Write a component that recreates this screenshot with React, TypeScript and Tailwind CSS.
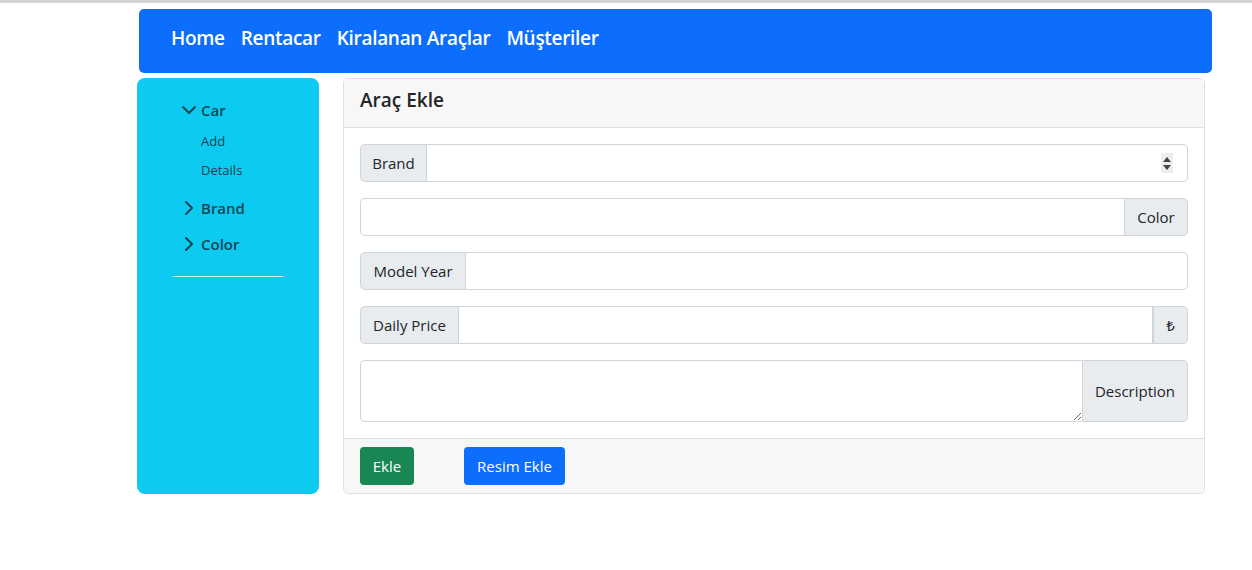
import { ChevronDown, ChevronRight } from "lucide-react";

const font = { fontFamily: '"Open Sans", "Noto Sans", sans-serif' };

function Addon({ label, className }: { label: string; className: string }) {
  return (
    <span
      className={`flex shrink-0 items-center justify-center border border-[#ced4da] bg-[#e9ecef] text-[15px] text-[#212529] ${className}`}
    >
      {label}
    </span>
  );
}

function Field({ children }: { children: React.ReactNode }) {
  return <div className="flex h-[38px] w-full">{children}</div>;
}

export default function App() {
  return (
    <div className="min-h-[570px] border-t-[3px] border-[#d4d4d4] bg-white text-[#212529]" style={font}>
      <nav className="ml-[139px] mt-[6px] flex h-[64px] w-[1073px] items-center gap-[16px] rounded-[5px] bg-[#0d6efd] pb-[6px] pl-[32px] text-[19px] font-semibold tracking-[-0.3px] text-white">
        <span>Home</span>
        <span>Rentacar</span>
        <span>Kiralanan Araçlar</span>
        <span>Müşteriler</span>
      </nav>

      <div className="mt-[5px] flex items-start">
        <aside className="ml-[137px] h-[416px] w-[182px] rounded-[8px] bg-[#0dcaf0] pt-[19px] text-[#124655]">
          <div className="flex flex-col pl-[40px]">
            <div className="flex h-[26px] items-center text-[15px] font-semibold">
              <ChevronDown className="h-[24px] w-[24px]" strokeWidth={2} />
              <span>Car</span>
            </div>
            <div className="mt-[4px] flex flex-col pl-[24px] text-[13px] text-[#18414d]">
              <span className="h-[29px] leading-[29px]">Add</span>
              <span className="h-[29px] leading-[29px]">Details</span>
            </div>
            <div className="mt-[5px] flex h-[36px] items-center text-[15px] font-semibold">
              <ChevronRight className="h-[24px] w-[24px]" strokeWidth={2} />
              <span>Brand</span>
            </div>
            <div className="flex h-[36px] items-center text-[15px] font-semibold">
              <ChevronRight className="h-[24px] w-[24px]" strokeWidth={2} />
              <span>Color</span>
            </div>
          </div>
          <div className="ml-[36px] mt-[14px] h-px w-[110px] bg-[#cdf4fc]" />
        </aside>

        <section className="ml-[24px] flex h-[416px] w-[862px] flex-col rounded-[5px] border border-[#dfdfdf]">
          <header className="flex h-[49px] items-center border-b border-[#dfdfdf] bg-[#f7f7f7] pb-[5px] pl-[16px] text-[19px] font-semibold">
            Araç Ekle
          </header>

          <div className="flex flex-1 flex-col gap-[16px] bg-white px-[16px] pt-[16px]">
            <Field>
              <Addon label="Brand" className="w-[67px] rounded-l-[5px]" />
              <div className="relative flex-1 rounded-r-[5px] border border-l-0 border-[#ced4da]">
                <div className="absolute right-[14px] top-[8px] flex h-[20px] w-[12px] flex-col items-center justify-center gap-[3px] bg-[#ededed]">
                  <span className="h-0 w-0 border-x-[4px] border-b-[5px] border-x-transparent border-b-[#444]" />
                  <span className="h-0 w-0 border-x-[4px] border-t-[5px] border-x-transparent border-t-[#444]" />
                </div>
              </div>
            </Field>
            <Field>
              <div className="flex-1 rounded-l-[5px] border border-r-0 border-[#ced4da]" />
              <Addon label="Color" className="w-[64px] rounded-r-[5px]" />
            </Field>
            <Field>
              <Addon label="Model Year" className="w-[106px] rounded-l-[5px]" />
              <div className="flex-1 rounded-r-[5px] border border-l-0 border-[#ced4da]" />
            </Field>
            <Field>
              <Addon label="Daily Price" className="w-[99px] rounded-l-[5px]" />
              <div className="flex-1 border border-l-0 border-[#ced4da]" />
              <Addon label="₺" className="w-[35px] rounded-r-[5px] text-[13px]" />
            </Field>
            <div className="flex h-[62px] w-full">
              <textarea className="h-full flex-1 rounded-l-[5px] border border-r-0 border-[#ced4da] outline-none" />
              <Addon label="Description" className="w-[106px] rounded-r-[5px]" />
            </div>
          </div>

          <footer className="mt-[1px] flex h-[55px] items-center gap-[50px] rounded-b-[5px] border-t border-[#dfdfdf] bg-[#f7f7f7] pl-[16px] text-[15px]">
            <button className="h-[38px] w-[54px] rounded-[4px] bg-[#198754] text-white">Ekle</button>
            <button className="h-[38px] w-[101px] rounded-[4px] bg-[#0d6efd] text-white">Resim Ekle</button>
          </footer>
        </section>
      </div>
    </div>
  );
}
